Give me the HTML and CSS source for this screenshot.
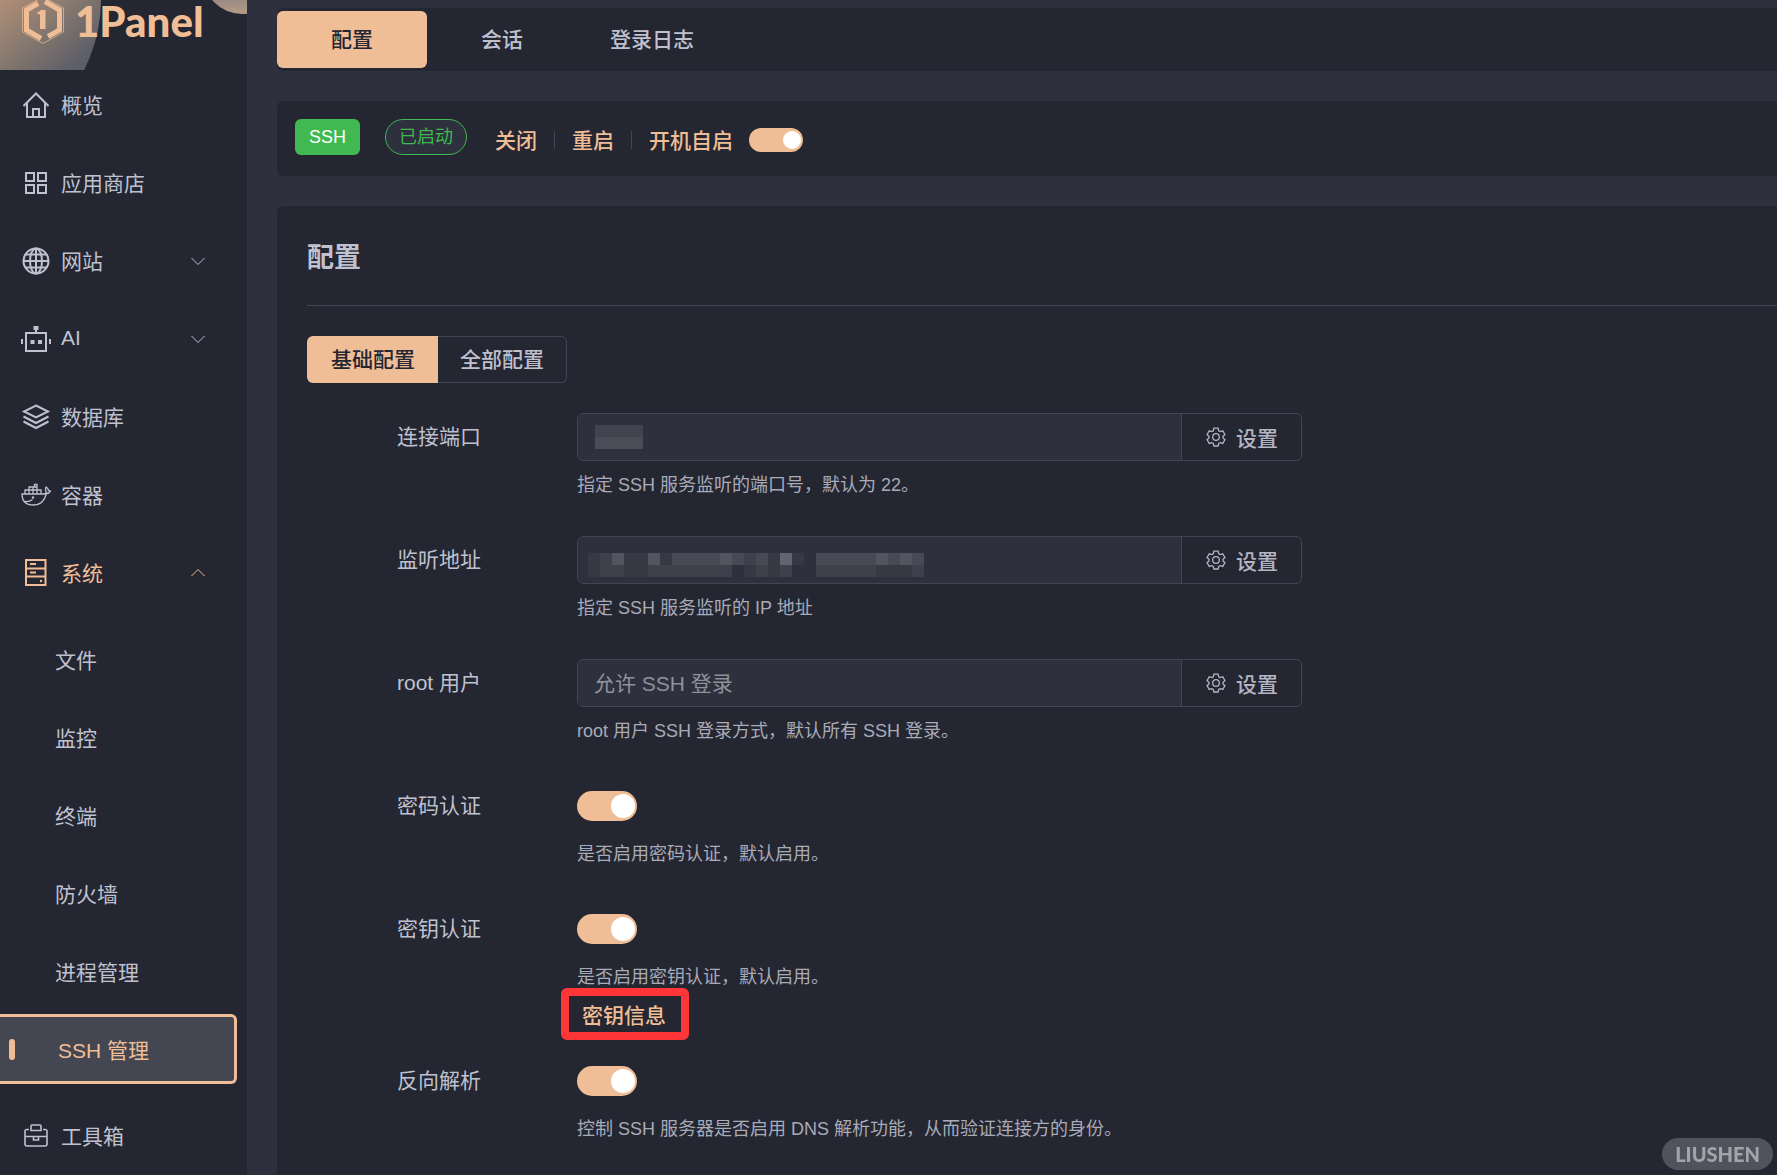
FILE: index.html
```html
<!DOCTYPE html>
<html lang="zh-CN">
<head>
  <meta charset="UTF-8">
  <meta name="viewport" content="width=device-width, initial-scale=1.0">
  <title>1Panel</title>
  <link rel="stylesheet" href="styles.css">
</head>
<body>
  <svg class="sprite" aria-hidden="true">
    <symbol id="icon-down" viewBox="0 0 16 16"><path d="M1.5 5 8 11.5 14.5 5"/></symbol>
    <symbol id="icon-up" viewBox="0 0 16 16"><path d="M1.5 11 8 4.5 14.5 11"/></symbol>
    <symbol id="icon-gear" viewBox="0 0 20 20">
      <path d="M7.9 1.2h4.2l.6 2.5 1.6.9 2.5-.8 2.1 3.700-1.900 1.700v1.800l1.900 1.700-2.100 3.700-2.500-.8-1.600.9-.6 2.500H7.900l-.6-2.500-1.600-.9-2.500.8-2.100-3.700L3 11V9.200L1.100 7.500l2.100-3.700 2.500.8 1.600-.9z"/>
      <circle cx="10" cy="10" r="3.3"/>
    </symbol>
  </svg>

  <div class="layout">
    <aside class="sidebar">
      <div class="logo">
        <svg class="logo-bg" width="247" height="70" viewBox="0 0 247 70">
          <defs>
            <linearGradient id="blob1" gradientUnits="userSpaceOnUse" x1="0" y1="0" x2="65" y2="75">
              <stop offset="0" stop-color="#b08e77"/>
              <stop offset=".5" stop-color="#86796f"/>
              <stop offset="1" stop-color="#5d5e68"/>
            </linearGradient>
            <linearGradient id="blob2" x1="0" y1="0" x2="0" y2="1">
              <stop offset=".6" stop-color="#77777d"/>
              <stop offset="1" stop-color="#b79b86"/>
            </linearGradient>
          </defs>
          <circle cx="-51" cy="0" r="152" fill="url(#blob1)"/>
          <circle cx="242" cy="-25" r="39" fill="url(#blob2)"/>
        </svg>
        <svg class="logo-mark" width="44" height="48" viewBox="0 0 44 48">
          <path d="M22 1 42.500 12v24L22 47.500 1.500 36V12z" fill="none" stroke="#f0be96" stroke-opacity=".7"/>
          <path d="M24 5.500 38.500 14v20L27 40.500M20 42.500 5.500 34V14L17 7.500" fill="none" stroke="#f0be96" stroke-width="5"/>
          <path d="M15.500 17.500 20 14h4.500v19H19V18.500z" fill="#f0be96"/>
        </svg>
        <span class="logo-text">1Panel</span>
      </div>

      <nav class="menu">
        <a class="menu-item" href="#">
          <svg class="menu-icon" viewBox="0 0 30 30"><path d="M2.500 16 15 3.500 27.500 16M6 13v14h18V13M12 27v-8h6v8"/></svg>
          <span>概览</span>
        </a>
        <a class="menu-item" href="#">
          <svg class="menu-icon" viewBox="0 0 30 30"><path d="M5 5h8v8H5zM17 5h8v8h-8zM5 17h8v8H5zM17 17h8v8h-8z"/></svg>
          <span>应用商店</span>
        </a>
        <a class="menu-item" href="#">
          <svg class="menu-icon" viewBox="0 0 30 30"><circle cx="15" cy="15" r="12.500"/><ellipse cx="15" cy="15" rx="6" ry="12.500"/><path d="M15 2.500v25M2.500 15h25M4.500 8.500h21M4.500 21.500h21"/></svg>
          <span>网站</span>
          <svg class="arrow"><use href="#icon-down"/></svg>
        </a>
        <a class="menu-item" href="#">
          <svg class="menu-icon" viewBox="0 0 30 30"><path d="M5 9h20v18H5zM15 9V4M1 15v5M29 15v5"/><path d="M12.500 2h5v4h-5zM9.500 16h4v4h-4zM17 16h4v4h-4z" class="solid"/></svg>
          <span>AI</span>
          <svg class="arrow"><use href="#icon-down"/></svg>
        </a>
        <a class="menu-item" href="#">
          <svg class="menu-icon" viewBox="0 0 30 30"><path d="M15 3.500 27 9.500 15 15.500 3 9.500zM2.500 14.500 15 21l12.500-6.500M2.500 19.500 15 26l12.500-6.500"/></svg>
          <span>数据库</span>
        </a>
        <a class="menu-item" href="#">
          <svg class="menu-icon docker" viewBox="0 0 30 30"><path d="M1 14h22c1.500 0 2.500-1 2-3-.8-1.500-.6-3 .2-4 1.500 1 2.200 2.200 2.300 3.500l2 .5c-.8 1.800-2 2.500-4 2.500-2 7.500-6 11.500-13 11.500C5 25 1 21 1 14zM4 14v-4h4v4M8 10h4v4M8 10V7h4v3h4v4M12 7h4v3M13.500 7V4.500H16V14M16 10h4v4M3.500 21.500c4 .5 6-.5 8-2"/><circle cx="12" cy="17.500" r="1.200" class="solid"/></svg>
          <span>容器</span>
        </a>
        <a class="menu-item opened" href="#">
          <svg class="menu-icon" viewBox="0 0 30 30"><path d="M5 2h19.500v25H5zM5 10.500h19.500M5 18.500h19.500M9 6h6M9 14.500h6"/><circle cx="20" cy="23" r="1.200" class="solid"/></svg>
          <span>系统</span>
          <svg class="arrow"><use href="#icon-up"/></svg>
        </a>
        <div class="submenu">
          <a class="submenu-item" href="#">文件</a>
          <a class="submenu-item" href="#">监控</a>
          <a class="submenu-item" href="#">终端</a>
          <a class="submenu-item" href="#">防火墙</a>
          <a class="submenu-item" href="#">进程管理</a>
          <a class="submenu-item active" href="#">SSH 管理</a>
        </div>
        <a class="menu-item" href="#">
          <svg class="menu-icon toolbox" viewBox="0 0 30 30"><path d="M8 8.500H6a2 2 0 0 0-2 2V23a2 2 0 0 0 2 2h18a2 2 0 0 0 2-2V10.500a2 2 0 0 0-2-2h-2M10 9.500V5a1 1 0 0 1 1-1h8a1 1 0 0 1 1 1v4.500zM4 15.500h22"/><path d="M12.500 15v4h5v-4"/></svg>
          <span>工具箱</span>
        </a>
      </nav>
    </aside>

    <main class="main">
      <div class="tab-bar">
        <button class="tab active" type="button">配置</button>
        <button class="tab" type="button">会话</button>
        <button class="tab" type="button">登录日志</button>
      </div>

      <section class="card status">
        <span class="tag">SSH</span>
        <span class="tag round">已启动</span>
        <div class="actions">
          <button class="link-btn" type="button">关闭</button>
          <span class="split"></span>
          <button class="link-btn" type="button">重启</button>
          <span class="split"></span>
          <label class="link-btn" for="autoStart">开机自启</label>
          <input class="switch small" type="checkbox" id="autoStart" checked>
        </div>
      </section>

      <section class="card config">
        <h1>配置</h1>
        <hr>
        <div class="mode">
          <button class="mode-btn active" type="button">基础配置</button>
          <button class="mode-btn" type="button">全部配置</button>
        </div>

        <form>
          <div class="form-item">
            <label for="port">连接端口</label>
            <div class="content">
              <div class="input-group">
                <input type="text" id="port" disabled>
                <svg class="mosaic port-mosaic" width="48" height="24" viewBox="0 0 48 24" shape-rendering="crispEdges">
                  <path fill="#41434f" d="M0 0h48v12H0z"/>
                  <path fill="#4a4c58" d="M0 12h48v12H0z"/>
                </svg>
                <button type="button"><svg><use href="#icon-gear"/></svg>设置</button>
              </div>
              <p class="help">指定 SSH 服务监听的端口号，默认为 22。</p>
            </div>
          </div>
          <div class="form-item">
            <label for="address">监听地址</label>
            <div class="content">
              <div class="input-group">
                <input type="text" id="address" disabled>
                <svg class="mosaic address-mosaic" width="336" height="24" viewBox="0 0 336 24" shape-rendering="crispEdges">
                  <path fill="#363843" d="M0 0h216v12H0zM0 12h144v12H0zM156 12h48v12h-48zM228 0h108v12H228zM228 12h108v12H228z"/>
                  <path fill="#3e404b" d="M12 0h12v12H12zM12 12h24v12H12zM60 12h84v12H60zM168 12h12v12h-12zM192 12h12v12h-12zM228 12h60v12h-60zM324 12h12v12h-12zM156 0h12v12h-12z"/>
                  <path fill="#474954" d="M84 0h48v12H84zM144 0h12v12h-12zM168 0h12v12h-12zM228 0h108v12H228z"/>
                  <path fill="#525460" d="M24 0h12v12H24zM60 0h12v12H60zM132 0h12v12h-12zM288 0h12v12h-12zM312 0h12v12h-12z"/>
                  <path fill="#62646f" d="M192 0h12v12h-12z"/>
                </svg>
                <button type="button"><svg><use href="#icon-gear"/></svg>设置</button>
              </div>
              <p class="help">指定 SSH 服务监听的 IP 地址</p>
            </div>
          </div>
          <div class="form-item">
            <label for="root">root 用户</label>
            <div class="content">
              <div class="input-group">
                <input type="text" id="root" value="允许 SSH 登录" disabled>
                <button type="button"><svg><use href="#icon-gear"/></svg>设置</button>
              </div>
              <p class="help">root 用户 SSH 登录方式，默认所有 SSH 登录。</p>
            </div>
          </div>
          <div class="form-item">
            <label for="password">密码认证</label>
            <div class="content">
              <div class="control"><input class="switch" type="checkbox" id="password" checked></div>
              <p class="help">是否启用密码认证，默认启用。</p>
            </div>
          </div>
          <div class="form-item with-key">
            <label for="pubkey">密钥认证</label>
            <div class="content">
              <div class="control"><input class="switch" type="checkbox" id="pubkey" checked></div>
              <p class="help">是否启用密钥认证，默认启用。</p>
              <button class="key-btn" type="button">密钥信息</button>
            </div>
          </div>
          <div class="form-item">
            <label for="dns">反向解析</label>
            <div class="content">
              <div class="control"><input class="switch" type="checkbox" id="dns" checked></div>
              <p class="help">控制 SSH 服务器是否启用 DNS 解析功能，从而验证连接方的身份。</p>
            </div>
          </div>
        </form>
      </section>
    </main>
  </div>

  <div class="watermark">LIUSHEN</div>
</body>
</html>
```
FILE: styles.css
```css
* {
  box-sizing: border-box;
}
body {
  margin: 0;
  background-color: #2e303d;
  color: #bfc1cf;
  font-family: "Liberation Sans", "Noto Sans CJK SC", sans-serif;
  font-size: 21px;
}
button, input {
  font-family: inherit;
  font-size: inherit;
}
button {
  cursor: pointer;
}
a {
  color: inherit;
  text-decoration: none;
}
svg {
  flex: none;
}
.sprite {
  position: absolute;
  width: 0;
  height: 0;
}
.layout {
  display: flex;
  height: 100vh;
  overflow: hidden;
}

/* sidebar */
.sidebar {
  flex: none;
  width: 247px;
  background-color: #242632;
  overflow: hidden;
}
.logo {
  position: relative;
  display: flex;
  height: 66px;
  padding-left: 21px;
  gap: 10px;
}
.logo-bg {
  position: absolute;
  top: 0;
  left: 0;
}
.logo-mark {
  position: relative;
  margin-top: -4px;
}
.logo-text {
  position: relative;
  color: #f0be96;
  font-family: Lato, sans-serif;
  font-size: 42px;
  line-height: 42px;
  font-weight: 900;
}
.menu-item {
  display: flex;
  align-items: center;
  height: 78px;
  padding: 0 41px 0 21px;
  gap: 10px;
}
.menu-item span {
  padding-bottom: 3px;
}
.menu-icon {
  width: 30px;
  height: 30px;
  fill: none;
  stroke: currentColor;
  stroke-width: 2;
}
.menu-icon.docker {
  stroke-width: 1.3;
}
.menu-icon.toolbox {
  stroke-width: 1.6;
}
.solid {
  fill: currentColor;
  stroke: none;
}
.arrow {
  width: 16px;
  height: 16px;
  margin-left: auto;
  fill: none;
  stroke: currentColor;
}
.opened {
  color: #f0be96;
}
.submenu {
  padding: 8px 0 9px;
}
.submenu-item {
  display: flex;
  align-items: center;
  height: 78px;
  padding-left: 55px;
}
.submenu-item.active {
  position: relative;
  height: 70px;
  margin: 4px 10px 4px 0;
  border: 3px solid #f0be96;
  border-left: none;
  border-radius: 0 6px 6px 0;
  padding-left: 58px;
  background-color: #444651;
  color: #f0be96;
}
.submenu-item.active::before {
  content: "";
  position: absolute;
  left: 9px;
  width: 6px;
  height: 21px;
  border-radius: 3px;
  background-color: #f0be96;
}

/* main */
.main {
  flex: 1;
  display: flex;
  flex-direction: column;
  padding: 8px 0 0 30px;
}
.tab-bar {
  flex: none;
  display: flex;
  height: 63px;
  padding: 3px 0;
  background-color: #242632;
  border-radius: 6px 0 0 6px;
}
.tab {
  min-width: 150px;
  border: none;
  border-radius: 6px;
  padding: 0 33px 4px;
  background: none;
  color: #bfc1cf;
  font-weight: 500;
}
.tab.active {
  background-color: #f0be96;
  color: #242632;
}
.card {
  background-color: #242632;
  border-radius: 6px 0 0 6px;
}
.status {
  flex: none;
  display: flex;
  height: 75px;
  margin: 30px 0;
  padding: 18px;
}
.tag {
  height: 36px;
  margin-right: 25px;
  border-radius: 6px;
  padding: 0 14px;
  background-color: #3fb950;
  color: #fff;
  font-size: 18px;
  line-height: 36px;
}
.tag.round {
  margin-right: 28px;
  border: 1px solid #3fb950;
  border-radius: 18px;
  padding: 0 13px;
  background-color: #2e303d;
  color: #3fb950;
  line-height: 34px;
}
.actions {
  display: flex;
  align-items: center;
  height: 42px;
}
.link-btn {
  border: none;
  padding: 0 0 2px;
  background: none;
  color: #f0be96;
  font-weight: 500;
}
.split {
  width: 1px;
  height: 18px;
  margin: 0 17px;
  background-color: #434552;
}
.switch {
  appearance: none;
  display: flex;
  align-items: center;
  justify-content: flex-end;
  width: 60px;
  height: 30px;
  margin: 0;
  border-radius: 15px;
  padding: 0 2px;
  background-color: #f0be96;
}
.switch::before {
  content: "";
  width: 24px;
  height: 24px;
  border-radius: 50%;
  background-color: #fff;
}
.switch.small {
  width: 54px;
  height: 24px;
  margin-left: 16px;
}
.switch.small::before {
  width: 18px;
  height: 18px;
}

.config {
  flex: 1;
  padding: 31px 0 0 30px;
}
h1 {
  margin: 0;
  font-size: 27px;
  line-height: 42px;
}
hr {
  height: 1px;
  margin: 26px 0 30px;
  border: none;
  background-color: #434552;
}
.mode {
  display: flex;
  height: 47px;
}
.mode-btn {
  border: 1px solid #434552;
  border-left: none;
  border-radius: 0 6px 6px 0;
  padding: 0 22px 3px;
  background: none;
  color: #bfc1cf;
  font-weight: 500;
}
.mode-btn.active {
  border: none;
  border-radius: 6px 0 0 6px;
  padding: 0 23px 3px 24px;
  background-color: #f0be96;
  color: #242632;
}
form {
  margin: 30px 0 0 90px;
}
.form-item {
  display: flex;
  margin-bottom: 38px;
}
.form-item > label {
  flex: none;
  width: 180px;
  line-height: 48px;
}
.content {
  flex: 1;
}
.input-group {
  position: relative;
  display: flex;
  max-width: 725px;
  height: 48px;
  border: 1px solid #434552;
  border-radius: 6px;
  overflow: hidden;
}
.input-group input {
  flex: 1;
  min-width: 0;
  border: none;
  padding: 0 16px 2px;
  background-color: #2e303d;
  color: #8f919d;
}
.input-group button {
  display: flex;
  align-items: center;
  gap: 10px;
  border: none;
  border-left: 1px solid #434552;
  padding: 0 23px 0 24px;
  background: none;
  color: #b3b5c2;
  font-weight: 500;
}
.input-group button svg {
  width: 20px;
  height: 20px;
  fill: none;
  stroke: currentColor;
  stroke-width: 1.3;
}
/* masked values */
.mosaic {
  position: absolute;
}
.port-mosaic {
  top: 11px;
  left: 17px;
}
.address-mosaic {
  top: 16px;
  left: 10px;
}
.control {
  display: flex;
  align-items: center;
  height: 48px;
}
.help {
  margin: 11px 0 0;
  color: #a9abb7;
  font-size: 18px;
  line-height: 26px;
}
.with-key {
  margin-bottom: 17px;
}
.key-btn {
  display: block;
  width: 128px;
  height: 52px;
  margin: -2px 0 0 -16px;
  border: 8px solid #ff3638;
  border-radius: 6px;
  padding: 0 2px 1px 0;
  background: none;
  color: #f0be96;
  font-weight: 500;
}
.watermark {
  position: fixed;
  right: 4px;
  bottom: 5px;
  height: 32px;
  padding: 0 13px;
  border-radius: 16px;
  background-color: #50525c;
  color: #a3a4aa;
  font-family: Lato, sans-serif;
  font-size: 20px;
  line-height: 32px;
  font-weight: 900;
}
```
